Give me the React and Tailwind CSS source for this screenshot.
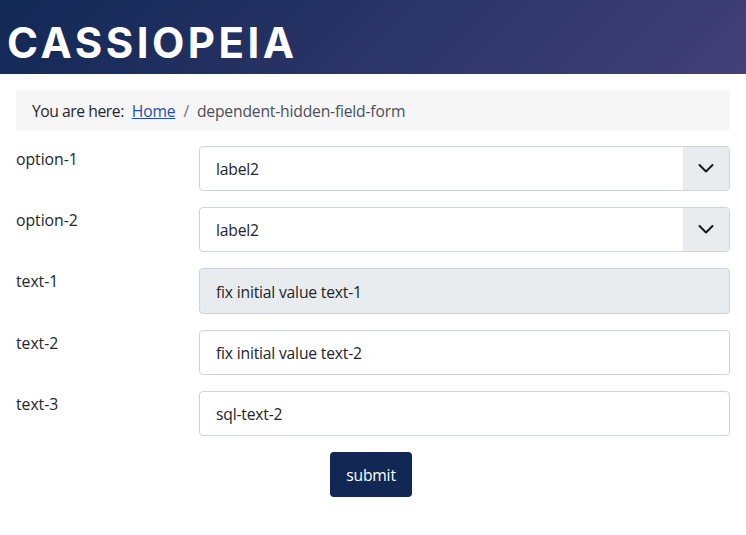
import React from "react"

function Row({ label, children }) {
  return (
    <div className="flex items-start">
      <label className="w-[183px] shrink-0 pt-[1px] text-[15.8px] leading-[24px] tracking-[-0.05px] text-[#22262a]">
        {label}
      </label>
      <div className="flex-1">{children}</div>
    </div>
  )
}

function SelectBox({ value }) {
  return (
    <div className="flex h-[45px] items-center justify-between overflow-hidden rounded border border-[#ced4da] bg-white">
      <span className="pt-[2px] pl-[16px] text-[15.7px] tracking-[-0.2px] text-[#212529]">{value}</span>
      <span className="flex h-full w-[46px] items-center justify-center bg-[#e9ecef]">
        <svg width="16" height="11" viewBox="0 0 16 11" fill="none">
          <path d="M1.5 2 L8 8.5 L14.5 2" stroke="#15181b" strokeWidth="2" strokeLinecap="round" strokeLinejoin="round" />
        </svg>
      </span>
    </div>
  )
}

function TextBox({ value, disabled }) {
  return (
    <div
      className={
        disabled
          ? "flex h-[46px] items-center rounded border border-[#ced4da] bg-[#e9ecef] pt-[3px] pl-[16px] text-[15.7px] tracking-[-0.2px] text-[#212529]"
          : "flex h-[45px] items-center rounded border border-[#ced4da] bg-white pt-[2px] pl-[16px] text-[15.7px] tracking-[-0.2px] text-[#212529]"
      }
    >
      {value}
    </div>
  )
}

export default function App() {
  return (
    <div className="min-h-[535px] bg-white font-['Open_Sans','Noto_Sans',sans-serif]">
      <header className="flex h-[74px] items-center bg-[linear-gradient(135deg,#112855_0%,#424077_100%)] pt-[11px] pl-[7px]">
        <span className="font-['Inter',sans-serif] text-[42px] leading-none font-bold tracking-[3.5px] text-white">
          CASSIOPEIA
        </span>
      </header>
      <nav className="mx-4 mt-4 flex h-10 items-center bg-[#f6f6f6] pt-[3px] pl-4 text-[15.7px] tracking-[-0.2px] text-[#22262a]">
        <span className="tracking-[-0.45px]">You are here:</span>
        <a href="#" className="ml-2 text-[#224faa] underline">
          Home
        </a>
        <span className="mx-2 text-[#6d757e]">/</span>
        <span className="text-[#495057]">dependent-hidden-field-form</span>
      </nav>
      <form className="mx-4 mt-4 flex flex-col gap-4">
        <Row label="option-1">
          <SelectBox value="label2" />
        </Row>
        <Row label="option-2">
          <SelectBox value="label2" />
        </Row>
        <Row label="text-1">
          <TextBox value="fix initial value text-1" disabled />
        </Row>
        <Row label="text-2">
          <TextBox value="fix initial value text-2" />
        </Row>
        <Row label="text-3">
          <TextBox value="sql-text-2" />
        </Row>
        <div className="pl-[314px]">
          <button
            type="button"
            className="h-[45px] w-[82px] rounded bg-[#112855] pt-[2px] text-[15.7px] tracking-[-0.2px] text-white"
          >
            submit
          </button>
        </div>
      </form>
    </div>
  )
}
